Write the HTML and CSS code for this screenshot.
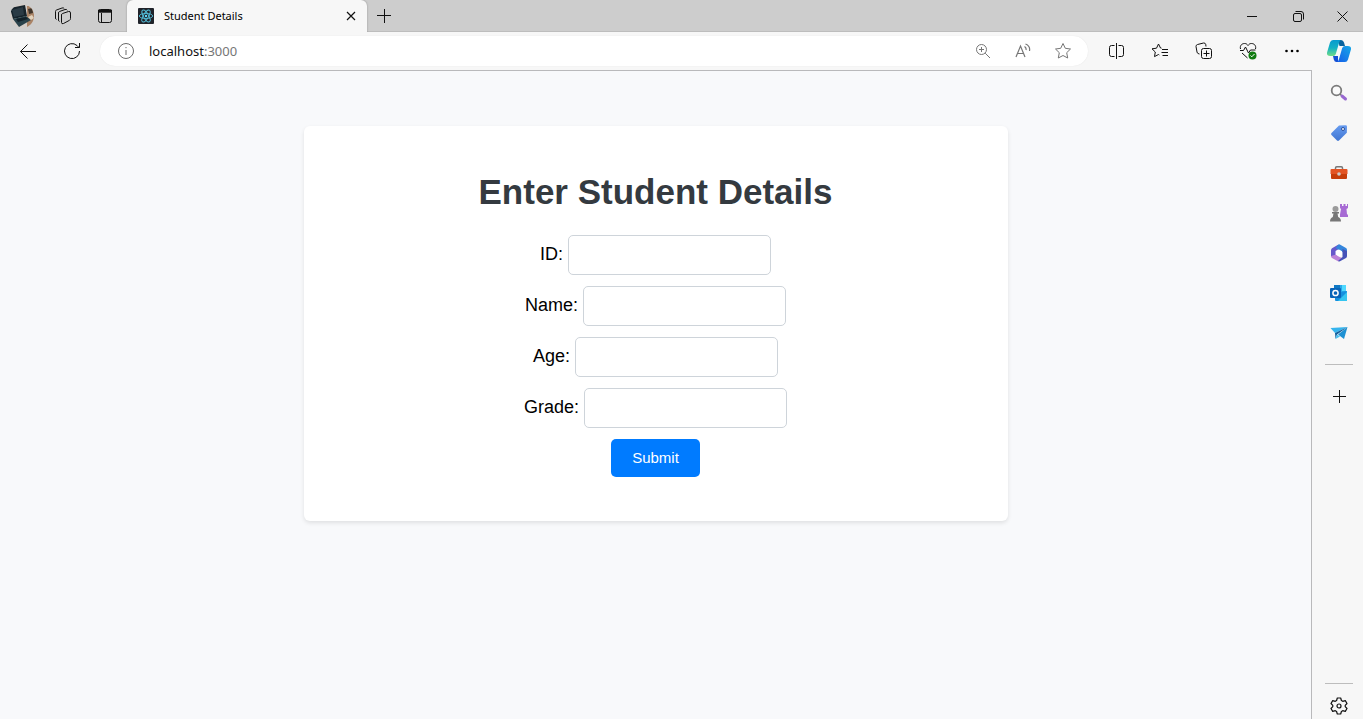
FILE: index.html
```html
<!DOCTYPE html>
<html lang="en">
<head>
<meta charset="utf-8">
<title>Student Details</title>
<link rel="stylesheet" href="styles.css">
</head>
<body>
<div class="browser">
  <header class="tabstrip">
    <button class="strip-btn avatar-btn" aria-label="Profile">
      <svg width="24" height="24" viewBox="0 0 24 24"><defs><clipPath id="round"><circle cx="12" cy="12" r="12"/></clipPath></defs><g clip-path="url(#round)"><path fill="#d3cdc8" d="M0 0h24v24H0z"/><path fill="#aa8467" d="M17 2h7v21h-7z"/><path fill="#17242c" d="M0 4l15-3 2 11-14 3z"/><path fill="#2b3b45" d="M2 6l11-3 1 8-10 2z"/><path fill="#29424b" d="M3 15l13-3 5 4-12 7z"/><path fill="#132129" d="M6 15l10-2 2 2-10 3z"/><path fill="#e3d3bd" d="M18 13l4-2 2 3-3 2z"/><path fill="#40352b" d="M18 5l4-1 1 5-4 1z"/></g></svg>
    </button>
    <button class="strip-btn" aria-label="Workspaces">
      <svg class="line" width="18" height="18" viewBox="0 0 18 18"><path stroke-linejoin="round" d="M8.500 6.500l6-2q2-.5 2 1.500v5.500q0 1.200-1 1.800L9.500 16.500q-2 .8-2-1V8q0-1.200 1-1.500zM5.500 14.500q-1-.3-1-1.500V6q0-1.200 1-1.500l5.500-2q1.700-.5 2.300.8M2.500 12.500q-1-.3-1-1.500V4.500q0-1.200 1-1.500L8 1q1.500-.5 2.200.5"/></svg>
    </button>
    <button class="strip-btn" aria-label="Tab actions">
      <svg class="line" width="16" height="16" viewBox="0 0 16 16"><rect x="1.500" y="1.500" width="13" height="13" rx="2"/><path d="M1 3.200h14" stroke-width="3"/><path d="M4.500 5v9"/></svg>
    </button>
    <div class="tab">
      <svg width="16" height="16" viewBox="0 0 16 16"><rect width="16" height="16" rx="1" fill="#20232a"/><g fill="none" stroke="#53bdd9" stroke-width=".9"><ellipse cx="8" cy="8" rx="6.700" ry="2.600"/><ellipse cx="8" cy="8" rx="6.700" ry="2.600" transform="rotate(60 8 8)"/><ellipse cx="8" cy="8" rx="6.700" ry="2.600" transform="rotate(120 8 8)"/></g><circle cx="8" cy="8" r="1.200" fill="#61dafb"/></svg>
      <span class="tab-title">Student Details</span>
      <button class="tab-close" aria-label="Close tab"><svg class="line" width="10" height="10" viewBox="0 0 10 10"><path stroke-width="1.200" d="M1 1l8 8M9 1L1 9"/></svg></button>
    </div>
    <button class="new-tab" aria-label="New tab"><svg class="line" width="16" height="16" viewBox="0 0 16 16"><path d="M8.500 1v14M1 7.500h14"/></svg></button>
    <div class="window-controls">
      <button aria-label="Minimize"><svg class="line" width="10" height="10" viewBox="0 0 10 10"><path d="M0 5.500h10"/></svg></button>
      <button aria-label="Restore"><svg class="line" width="11" height="11" viewBox="0 0 11 11"><rect x=".5" y="2.500" width="8" height="8" rx="1.500"/><path d="M2.500.5h5.500q2.500 0 2.500 2.500v5.500"/></svg></button>
      <button class="window-close" aria-label="Close"><svg class="line" width="11" height="11" viewBox="0 0 11 11"><path d="M.5.5l10 10M10.500.5l-10 10"/></svg></button>
    </div>
  </header>

  <nav class="toolbar">
    <button class="tool" aria-label="Back"><svg class="line" width="18" height="16" viewBox="0 0 18 16"><path d="M17 8.500H1.500M8.500 1.500l-7 7 7 7"/></svg></button>
    <button class="tool" aria-label="Refresh"><svg class="line" width="18" height="18" viewBox="0 0 18 18"><path d="M16.500 9a7.500 7.500 0 1 1-2.500-5.500l2 2M16.500 1v4.500H12"/></svg></button>
    <div class="address">
      <svg class="info" width="18" height="18" viewBox="0 0 18 18"><circle cx="9" cy="9" r="7.500"/><path d="M9 8v5M9 5v1.200"/></svg>
      <span class="url">localhost<span class="port">:3000</span></span>
      <button class="addr-btn" aria-label="Zoom"><svg class="line" width="16" height="16" viewBox="0 0 16 16"><circle cx="6.500" cy="6.500" r="5"/><path d="M10.200 10.200l4.800 4.800M6.500 4v5M4 6.500h5"/></svg></button>
      <button class="addr-btn" aria-label="Read aloud"><svg class="line" width="16" height="16" viewBox="0 0 16 16"><path stroke-width="1.200" d="M1 14L5.500 3 10 14M2.500 10.500h6M9.500 3.500q2 1.200 1.500 3.500M10.500 1q5 2 4 7"/></svg></button>
      <button class="addr-btn" aria-label="Favorite"><svg class="line" width="18" height="18" viewBox="0 0 18 18"><path stroke-linejoin="round" d="M9 1.500l2.300 4.800 5.200.7-3.800 3.700 1 5.300L9 13.500 4.300 16l1-5.300L1.500 7l5.200-.7z"/></svg></button>
    </div>
    <div class="tools">
      <button class="tool" aria-label="Split screen"><svg class="line" width="17" height="16" viewBox="0 0 17 16"><path d="M6.500 2.500H3.500q-2 0-2 2v7q0 2 2 2h3M10.500 2.500h3q2 0 2 2v7q0 2-2 2h-3M8.500 0v16"/></svg></button>
      <button class="tool" aria-label="Favorites"><svg class="line" width="18" height="16" viewBox="0 0 18 16"><path stroke-linejoin="round" d="M10.500 5.200L9.500 5 7.500 1 5.500 5.200l-4.500.6 3.300 3.200-.8 4.600 4-2.100.8.5M11 6.500h6M10.500 9.500H17M11.500 12.500H17"/></svg></button>
      <button class="tool" aria-label="Collections"><svg class="line" width="18" height="18" viewBox="0 0 18 18"><rect x="6.500" y="6.500" width="10" height="10" rx="2"/><path d="M11.500 8.500v6M8.500 11.500h6M4.500 12L3 11.500q-.8-.4-1-1.500L1 4.500Q.9 3 2.500 2.500l6-1.500q1.800-.2 2.200 1.300L11 4.500"/></svg></button>
      <button class="tool" aria-label="Browser essentials"><svg width="18" height="18" viewBox="0 0 18 18"><path class="outline" d="M1.500 7C.5 3 3.500 1.500 5.500 1.500c2 0 2.500.8 3.500 2 1-1.200 1.500-2 3.500-2S17.500 3 16.500 7M1 8.500h3.500L6.500 5l3 6 2-3h5M3 11l5.500 5"/><circle cx="13.500" cy="13.500" r="4" fill="#107c10"/><path d="M11.500 13.500l1.300 1.300 2.700-2.800" stroke="#fff" fill="none"/></svg></button>
      <button class="tool" aria-label="Settings and more"><svg width="14" height="4" viewBox="0 0 14 4"><circle cx="1.500" cy="2" r="1.300"/><circle cx="7" cy="2" r="1.300"/><circle cx="12.500" cy="2" r="1.300"/></svg></button>
      <button class="tool copilot" aria-label="Copilot"><svg width="24" height="22" viewBox="0 0 24 22"><defs><linearGradient id="cpa" x2="0" y2="1"><stop stop-color="#079acf"/><stop offset=".5" stop-color="#13b1c4"/><stop offset="1" stop-color="#70dc87"/></linearGradient><linearGradient id="cpb" x1="1" x2="0" y2="1"><stop stop-color="#16a8e7"/><stop offset="1" stop-color="#155ee9"/></linearGradient></defs><path fill="#08639e" d="M11 0h3q2.300 0 3 2.500l1 3.500h-5.500z"/><path fill="url(#cpa)" d="M6 0h8q-1.400.6-2 3L8.800 14q-.6 2-2.500 2H3q-4 0-2.800-4L3 2.500Q3.700 0 6 0z"/><path fill="#134fd4" d="M6 16h5v6H9.500q-2 0-2.700-2.500z"/><path fill="url(#cpb)" d="M18 6h3q4 0 2.800 4L21 19.500q-.8 2.500-3 2.500h-8q1.400-.6 2-3L15.200 8q.8-2 2.800-2z"/></svg></button>
    </div>
  </nav>

  <main class="page">
    <section class="card">
      <h1>Enter Student Details</h1>
      <form class="form">
        <div class="row"><label for="sid">ID:</label><input id="sid" type="text"></div>
        <div class="row"><label for="name">Name:</label><input id="name" type="text"></div>
        <div class="row"><label for="age">Age:</label><input id="age" type="text"></div>
        <div class="row"><label for="grade">Grade:</label><input id="grade" type="text"></div>
        <button class="submit" type="button">Submit</button>
      </form>
    </section>
  </main>

  <aside class="sidebar">
    <button aria-label="Search"><svg width="18" height="18" viewBox="0 0 18 18"><circle cx="6.500" cy="6.500" r="4.800" fill="#fafafa" stroke="#7b7b7b" stroke-width="1.800"/><path d="M10 10l2 2" stroke="#777" stroke-width="1.500"/><path d="M12 12l3.500 3" stroke="#9868d0" stroke-width="3" stroke-linecap="round"/></svg></button>
    <button aria-label="Shopping"><svg width="18" height="18" viewBox="0 0 18 18"><defs><linearGradient id="tag" x2="0" y2="1"><stop stop-color="#679cf0"/><stop offset="1" stop-color="#4176d2"/></linearGradient></defs><path fill="url(#tag)" d="M9 1.500l6.500-.3q1.500 0 1.500 1.300l-.2 6.200L9 16.500q-1 .8-2 0L1.500 11q-1-1 0-2z"/><circle cx="13" cy="5" r="1.500" fill="#fff" stroke="#294f9c"/></svg></button>
    <button aria-label="Tools"><svg width="18" height="16" viewBox="0 0 18 16"><path d="M5.500 5V3q0-1.200 1.200-1.200h4.600q1.200 0 1.200 1.200v2" fill="none" stroke="#777" stroke-width="1.500"/><path fill="#e35424" d="M1.500 4h15q1 0 1 1v4h-17V5q0-1 1-1z"/><path fill="#c63d0b" d="M1 9h16v4q0 1-1 1H2q-1 0-1-1z"/><circle cx="9" cy="9" r="1.800" fill="#ccc"/></svg></button>
    <button aria-label="Games"><svg width="18" height="18" viewBox="0 0 18 18"><path fill="#a76bd4" d="M10 0h2v2h1.500V0h2v2H17V0h1v4l-1.500 1 .5 5.500h1V13h-8v-2.500l1-5.500-1-1z"/><circle cx="5.500" cy="5" r="3" fill="#9b9b9b"/><path fill="#777" d="M2 8h7v1.500H7.500l.7 3.500q2.800 1 2.800 4.500H0Q0 14 2.800 13l.7-3.500H2z"/></svg></button>
    <button aria-label="Microsoft 365"><svg width="18" height="18" viewBox="0 0 18 18"><path fill="#6758cb" d="M8.500.5L2 4.200Q1 5 1 6.500V12l4.500 2V7l4-2.500z"/><path fill="#3586dc" d="M8.500.5q.8-.5 1.800.2L16 4q1 .7 1 2v5l-4.500-3-7-4z"/><path fill="#bd83d8" d="M1 12l5-1.500 3.500 2.500 3 1-3 3q-1 .6-2 0L2 14q-1-.6-1-2z"/><path fill="#4652b8" d="M12.500 5L17 7v5q0 1.500-1 2l-6 3.300q-1.500.3-2-.3l4.500-4z"/><path fill="#fff" d="M9 5.500l3 1.800v3.400l-3 1.800-3-1.800V7.300z"/></svg></button>
    <button aria-label="Outlook"><svg width="18" height="18" viewBox="0 0 18 18"><path fill="#28a8ea" d="M4 1h12v12H4z"/><path fill="#0f78c4" d="M4 1h6v5H4z"/><path fill="#50d9ff" d="M12 1h4v6h-4z"/><path fill="#1490df" d="M5 9l12-2v10H6q-1 0-1-1z"/><path fill="#35c5f0" d="M17 8v9H8z"/><rect y="4" width="11" height="10" rx="1" fill="#0864b8"/><circle cx="5.500" cy="9" r="2.600" fill="none" stroke="#fff" stroke-width="1.500"/></svg></button>
    <button aria-label="Drop"><svg width="18" height="14" viewBox="0 0 18 14"><path fill="#35b4ed" d="M.5 2L17.500 1 5 7z"/><path fill="#145f9c" d="M5 7L17.500 1 7 8.500 5.500 13z"/><path fill="#1e91d3" d="M17.500 1L14 13 8 8.500z"/><path fill="#47bff0" d="M5.500 13L7 8.500 10 10.500z"/></svg></button>
    <hr>
    <button class="add" aria-label="Customize"><svg class="line" width="13" height="13" viewBox="0 0 13 13"><path d="M6.500 0v13M0 6.500h13"/></svg></button>
    <hr class="last">
    <button class="gear" aria-label="Settings"><svg class="line" width="18" height="18" viewBox="0 0 18 18"><path stroke-width="1.200" stroke-linejoin="round" d="M7.300 1h3.400l.7 2.500 1.300.8 2.600-.7L17 6.500 15.200 8.400v1.200L17 11.500l-1.700 2.900-2.600-.7-1.300.8-.7 2.500H7.300l-.7-2.500-1.300-.8-2.600.7L1 11.500l1.800-1.900V8.400L1 6.500l1.700-2.900 2.600.7 1.300-.8z"/><circle cx="9" cy="9" r="2" stroke-width="1.200"/></svg></button>
  </aside>
</div>
</body>
</html>
```
FILE: styles.css
```css
* { box-sizing: border-box; }
body { margin: 0; font-family: "Liberation Sans", Arial, sans-serif; }
button { padding: 0; border: 0; background: transparent; display: flex; align-items: center; justify-content: center; }
svg { flex: none; display: block; }
.line, .outline { fill: none; stroke: #111; stroke-width: 1; }
.line { stroke: currentColor; }
.outline { stroke: #111; }

.browser {
  display: grid;
  grid-template: 32px 38px 1fr / 1fr 51px;
  min-height: 100vh;
  background: #f7f7f7;
  color: #111;
}
.tabstrip, .toolbar { grid-column: 1 / -1; display: flex; }
.tabstrip { background: #cdcdcd; box-shadow: inset 0 -1px 0 #bdbdbd; }
.strip-btn { width: 42px; color: #111; }
.avatar-btn { padding-left: 2px; }
.tab {
  width: 240px;
  margin-left: 1px;
  display: flex;
  align-items: center;
  padding: 0 9px 0 11px;
  background: #f7f7f7;
  border-radius: 6px 6px 0 0;
  box-shadow: 0 0 2px #8c8c8c;
  clip-path: inset(0 -3px 0 -3px);
}
.tab-title { flex: 1; margin-left: 10px; font: 11px/16px "Noto Sans", sans-serif; color: #000; }
.tab-close { width: 14px; height: 14px; color: #111; }
.new-tab { width: 34px; color: #111; }
.window-controls { display: flex; margin-left: auto; }
.window-controls button { width: 46px; color: #111; }
.window-controls .window-close { width: 42px; padding-left: 1px; }

.toolbar { align-items: center; padding-left: 6px; }
.tool { width: 44px; height: 36px; color: #111; }
.tools { display: flex; margin-left: 6px; }
.copilot { width: 49px; }
.address {
  flex: 1;
  height: 30px;
  margin-left: 6px;
  padding: 0 5px 0 17px;
  display: flex;
  align-items: center;
  border-radius: 15px;
  background: #fff;
  box-shadow: 0 0 1px #ddd;
}
.info { fill: none; stroke: #6b6b6b; }
.url { flex: 1; margin-left: 14px; font: 13px/18px "Noto Sans", sans-serif; }
.port { color: #767676; }
.addr-btn { width: 40px; height: 30px; color: #767676; }

.page { background: #f8f9fb; border: solid #b9b9bb; border-width: 1px 1px 0 0; padding: 55px 24px; }
.card {
  max-width: 704px;
  margin: 0 auto;
  padding: 44px;
  background: #fff;
  border-radius: 6px;
  box-shadow: 0 2px 4px rgba(0, 0, 0, .1);
}
h1 { margin: 0 0 21px; font-size: 35px; line-height: 44px; text-align: center; color: #343a40; }
.form { display: flex; flex-direction: column; align-items: center; gap: 11px; font-size: 18px; color: #000; }
.row { display: flex; align-items: center; gap: 5px; }
.row label { line-height: 20px; padding-bottom: 2px; }
.row input { width: 203px; height: 40px; padding: 8px; border: 1px solid #ced4da; border-radius: 5px; font: inherit; background: #fff; }
.submit { padding: 10px 21px; font: 15px/18px "Liberation Sans", Arial, sans-serif; color: #fff; background: #007bff; border-radius: 5px; }

.sidebar { display: flex; flex-direction: column; align-items: center; padding: 3px 0 0 3px; }
.sidebar button { width: 40px; height: 40px; color: #111; }
.sidebar hr { width: 28px; height: 1px; margin: 11px 0; border: 0; background: #bdbdbd; }
.sidebar .last { margin: auto 0 9px; }
.sidebar .gear { height: 26px; }
```
